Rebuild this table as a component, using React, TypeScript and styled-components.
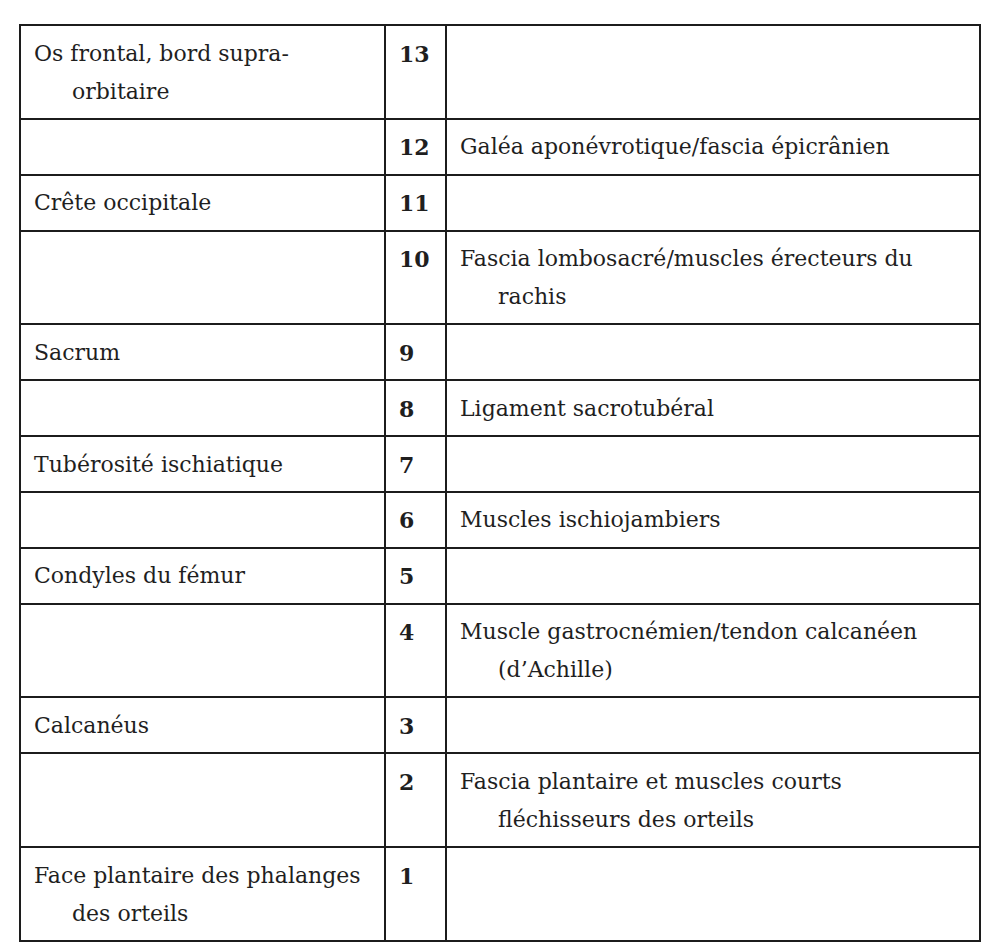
import styled, { createGlobalStyle } from "styled-components";

const GlobalStyle = createGlobalStyle`
    body {
        margin: 0;
        background: #ffffff;
        font-family: "DejaVu Serif", "Liberation Serif", serif;
        color: #1f1f1f;
    }
`;

type Row = { n: number, bone?: string, tissue?: string };

const rows: Row[] = [
    { n: 13, bone: "Os frontal, bord supra-orbitaire" },
    { n: 12, tissue: "Galéa aponévrotique/fascia épicrânien" },
    { n: 11, bone: "Crête occipitale" },
    { n: 10, tissue: "Fascia lombosacré/muscles érecteurs du rachis" },
    { n: 9, bone: "Sacrum" },
    { n: 8, tissue: "Ligament sacrotubéral" },
    { n: 7, bone: "Tubérosité ischiatique" },
    { n: 6, tissue: "Muscles ischiojambiers" },
    { n: 5, bone: "Condyles du fémur" },
    { n: 4, tissue: "Muscle gastrocnémien/tendon calcanéen (d’Achille)" },
    { n: 3, bone: "Calcanéus" },
    { n: 2, tissue: "Fascia plantaire et muscles courts fléchisseurs des orteils" },
    { n: 1, bone: "Face plantaire des phalanges des orteils" },
];

export default function App() {
    return <>
        <GlobalStyle />
        <Page>
            <Table>
                <colgroup>
                    <Col $w={365} />
                    <Col $w={61} />
                    <Col $w={534} />
                </colgroup>
                <tbody>
                    {rows.map((row) => <tr key={row.n}>
                        <TextCell>{row.bone ?? ""}</TextCell>
                        <NumCell>{row.n}</NumCell>
                        <TextCell>{row.tissue ?? ""}</TextCell>
                    </tr>)}
                </tbody>
            </Table>
        </Page>
    </>
}

const Page = styled.div`
    padding: 24px 0 0 19px;
`;

const Col = styled.col<{ $w: number }>`
    width: ${(p) => p.$w}px;
`;

const Table = styled.table`
    border-collapse: collapse;
    table-layout: fixed;
    width: 960px;

    td {
        border: 2px solid #1c1c1c;
        vertical-align: top;
        font-size: 22px;
        line-height: 38px;
        padding-top: 8.5px;
        padding-bottom: 7.35px;
    }
`;

const TextCell = styled.td`
    padding-left: 51px;
    padding-right: 12px;
    text-indent: -38px;
`;

const NumCell = styled.td`
    padding-left: 13px;
    font-weight: bold;
`;
